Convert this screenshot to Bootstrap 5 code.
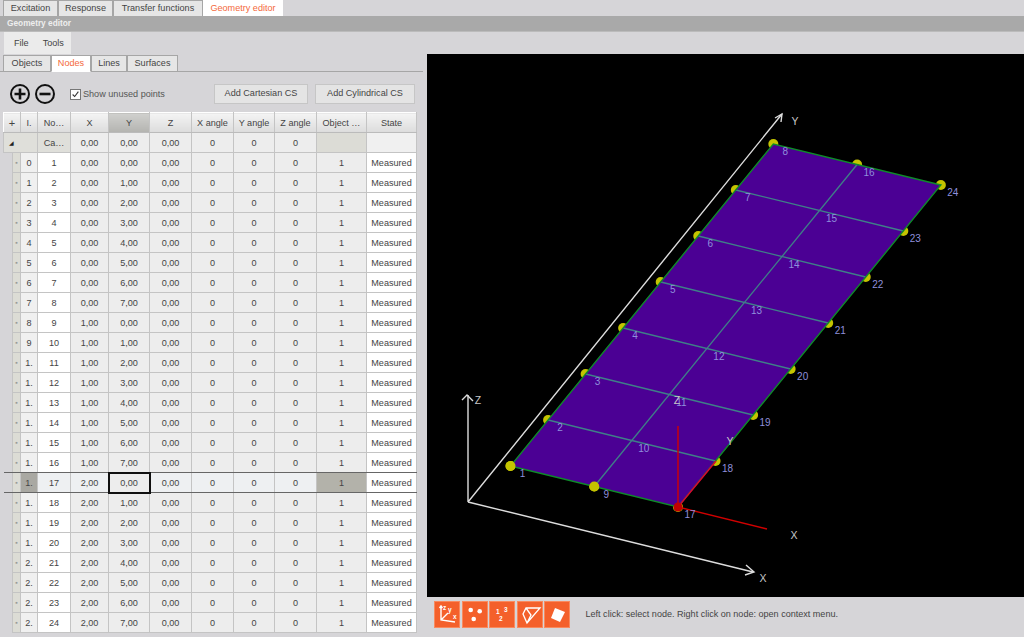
<!DOCTYPE html>
<html>
<head>
<meta charset="utf-8">
<title>Geometry editor</title>
<link rel="stylesheet" href="https://cdn.jsdelivr.net/npm/bootstrap@5.3.0/dist/css/bootstrap.min.css">
<script src="https://cdn.jsdelivr.net/npm/bootstrap@5.3.0/dist/js/bootstrap.bundle.min.js"></script>
<style>
html, body { height: 637px; overflow: hidden; }
body { background: #d6d5d8; color: #444; font: 9.1px "Liberation Sans", Arial, sans-serif; }
.main-tabs, .sub-tabs { border-bottom: 0; padding-left: 3px; flex-wrap: nowrap; }
.main-tabs { height: 16px; }
.sub-tabs { height: 17px; border-bottom: 1px solid #a6a6a6; margin: 1px 4px 0 0; }
.main-tabs .nav-link, .sub-tabs .nav-link { height: 16px; line-height: 15px; padding: 0; margin: 0; text-align: center; color: #444; background: #e6e6e6; border: 1px solid #a6a6a6; border-bottom: 0; border-radius: 0; font-size: 9.1px; }
.main-tabs .nav-link.active, .sub-tabs .nav-link.active { background: #fff; color: #f4693c; border-color: #fff; }
.sub-tabs .nav-link.active { border-color: #a6a6a6; border-bottom: 1px solid #fff; height: 17px; }
.t1 { width: 55px; } .t2 { width: 55px; } .t3 { width: 90px; } .t4 { width: 80px; }
.s1 { width: 48px; } .s2 { width: 40px; } .s3 { width: 36px; } .s4 { width: 51px; }
.title-bar { height: 16px; line-height: 15px; background: #a9a9a9; color: #eee; font-weight: 700; padding-left: 7px; font-size: 8.3px; border-bottom: 1px solid #bbb; }
.left-panel { width: 427px; height: 605px; flex: none; }
.menu-bar { height: 22px; width: 67px; margin-left: 4px; background: #ebebeb; gap: 14px; padding-left: 10px; line-height: 22px; font-size: 9.1px; }
.tool-row { height: 40px; padding: 4px 12px 0 9px; }
.round-btn { width: 22px; height: 22px; padding: 0; border: 0; background: none; line-height: 0; margin-right: 3px; }
.show-unused { margin: 0 0 0 11px; padding: 0; min-height: 0; gap: 2px; color: #555; }
.show-unused .form-check-input { float: none; margin: 0; width: 11px; height: 11px; border: 1px solid #777; border-radius: 0; background-color: #fff; --bs-form-check-bg-image: none; }
.show-unused .form-check-input:checked { background-image: url("data:image/svg+xml,%3csvg xmlns='http://www.w3.org/2000/svg' viewBox='0 0 11 11'%3e%3cpath d='M2 5.5l2.5 2.5 4.5-6' fill='none' stroke='%23333' stroke-width='1.3'/%3e%3c/svg%3e"); }
.cs-btn { height: 20px; padding: 0; background: #e4e4e4; border: 1px solid #c6c6c6; border-radius: 0; color: #444; font-size: 9.1px; }
.cs1 { width: 94px; margin-left: auto; margin-right: 7px; } .cs2 { width: 100px; }
.nodes-table { table-layout: fixed; width: 413px; margin: 0 0 0 3px; border-collapse: collapse; --bs-table-bg: transparent; --bs-table-color: #444; }
.nodes-table th, .nodes-table td { height: 20px; padding: 0; border: 1px solid #c4c4c4; text-align: center; vertical-align: middle; font-weight: 400; white-space: nowrap; overflow: hidden; color: #444; background: #ededed; box-shadow: none; }
.nodes-table thead th { height: 20px; background: linear-gradient(#f4f4f4, #dcdcdc); border-color: #fff #c4c4c4 #bbb #fff; }
.nodes-table thead th.sorted { background: linear-gradient(#d0d0ce, #b4b4b0); }
.nodes-table thead th.plus { font-size: 11px; }
.nodes-table td.white { background: #fff; }
.nodes-table td.indent { background: #d6d5d8; border: 0; }
.nodes-table td.mark { background: #dcdcd5; color: #999; font-size: 7px; }
.nodes-table td.idx { background: #f0f0f0; }
.nodes-table td.group { background: #dfdfda; }
.nodes-table td.group-tri { background: #dfdfda; text-align: left; padding-left: 5px; font-size: 5.5px; color: #222; border-right: 0; }
.nodes-table td.state-empty { background: #f0f0f0; }
.nodes-table td.obj-empty { background: #dcdcd6; }
.nodes-table tr:has(+ tr.sel) td { border-bottom: 1px solid #666; }
.nodes-table tr.sel td { background: #eef0f2; border-top: 1px solid #666; border-bottom: 1px solid #666; }
.nodes-table tr.sel td.indent { background: #d6d5d8; }
.nodes-table tr.sel td.mark { background: #dcdcd5; }
.nodes-table tr.sel td.idx { background: #a9a8a2; }
.nodes-table tr.sel td.white { background: #fff; }
.nodes-table tr.sel td.cur { outline: 2px solid #111; outline-offset: -1px; background: #ededed; }
.nodes-table tr.sel td.obj { background: #b3b2aa; }
.nodes-table tr.sel td.no { background: #eef0f2; }
.right-panel { height: 583px; min-width: 0; margin-top: 22px; }
.viewport { height: 543px; background: #000; line-height: 0; }
.viewport svg { display: block; }
.viewport text { font: 10px "Liberation Sans", Arial, sans-serif; fill: #8f8fdc; text-anchor: middle; }
.viewport text.axis { fill: #c8c8c8; font-size: 10.5px; }
.status-bar { height: 40px; padding: 4px 0 0 7px; }
.view-btn { width: 26px; height: 27px; padding: 0; margin-right: 1.5px; border: 1px solid #f98a5e; border-radius: 0; background: #f4602b; line-height: 0; }
.view-btn text { font: 700 6.5px "Liberation Sans", Arial, sans-serif; fill: #fff; }
.status-text { margin: 0 0 0 14px; font-size: 9.05px; color: #444; line-height: 27px; }
</style>
</head>
<body>
<ul class="nav main-tabs">
  <li class="nav-item"><a class="nav-link t1" href="#">Excitation</a></li>
  <li class="nav-item"><a class="nav-link t2" href="#">Response</a></li>
  <li class="nav-item"><a class="nav-link t3" href="#">Transfer functions</a></li>
  <li class="nav-item"><a class="nav-link t4 active" href="#">Geometry editor</a></li>
</ul>
<div class="title-bar">Geometry editor</div>

<div class="d-flex">
  <div class="left-panel">
    <div class="menu-bar d-flex"><span>File</span><span>Tools</span></div>
    <ul class="nav sub-tabs">
      <li class="nav-item"><a class="nav-link s1" href="#">Objects</a></li>
      <li class="nav-item"><a class="nav-link s2 active" href="#">Nodes</a></li>
      <li class="nav-item"><a class="nav-link s3" href="#">Lines</a></li>
      <li class="nav-item"><a class="nav-link s4" href="#">Surfaces</a></li>
    </ul>
    <div class="tool-row d-flex align-items-center">
      <button class="round-btn" type="button"><svg width="22" height="22" viewBox="0 0 22 22"><circle cx="11" cy="11" r="9" fill="none" stroke="#111" stroke-width="2"/><path d="M5.5 11h11M11 5.5v11" stroke="#111" stroke-width="2.6"/></svg></button>
      <button class="round-btn" type="button"><svg width="22" height="22" viewBox="0 0 22 22"><circle cx="11" cy="11" r="9" fill="none" stroke="#111" stroke-width="2"/><path d="M5.5 11h11" stroke="#111" stroke-width="2.6"/></svg></button>
      <div class="form-check show-unused d-flex align-items-center">
        <input class="form-check-input" type="checkbox" id="unused" checked>
        <label class="form-check-label" for="unused">Show unused points</label>
      </div>
      <button class="btn cs-btn cs1" type="button">Add Cartesian CS</button>
      <button class="btn cs-btn cs2" type="button">Add Cylindrical CS</button>
    </div>
    <table class="table nodes-table">
      <colgroup>
        <col style="width:9px"><col style="width:8px"><col style="width:17px"><col style="width:33px"><col style="width:38px"><col style="width:41px"><col style="width:42px"><col style="width:42px"><col style="width:41px"><col style="width:42px"><col style="width:50px"><col style="width:50px">
      </colgroup>
      <thead>
        <tr>
          <th class="plus" colspan="2">+</th><th>I.</th><th>No…</th><th>X</th><th class="sorted">Y</th><th>Z</th><th>X angle</th><th>Y angle</th><th>Z angle</th><th>Object …</th><th>State</th>
        </tr>
      </thead>
      <tbody id="rows">
        <tr>
          <td class="group-tri" colspan="3">◢</td><td class="group">Ca…</td><td>0,00</td><td>0,00</td><td>0,00</td><td>0</td><td>0</td><td>0</td><td class="obj-empty"></td><td class="state-empty"></td>
        </tr>
      </tbody>
    </table>
  </div>

  <div class="right-panel flex-grow-1">
    <div class="viewport">
      <svg id="scene" width="597" height="543" viewBox="427 54 597 543" xmlns="http://www.w3.org/2000/svg"></svg>
    </div>
    <div class="status-bar d-flex align-items-start">
      <button class="view-btn" type="button"><svg width="24" height="25" viewBox="0 0 24 25"><path d="M6 4v14l14 2M6 18l7-7M4.5 6L6 4l1.5 2" fill="none" stroke="#fff" stroke-width="1.4"/><text x="8" y="8">z</text><text x="13" y="10">y</text><text x="18" y="17">x</text></svg></button>
      <button class="view-btn" type="button"><svg width="24" height="25" viewBox="0 0 24 25"><circle cx="7.7" cy="8" r="2.3" fill="#fff"/><circle cx="16.7" cy="9.3" r="2.3" fill="#fff"/><circle cx="10.7" cy="17" r="2.3" fill="#fff"/></svg></button>
      <button class="view-btn" type="button"><svg width="24" height="25" viewBox="0 0 24 25"><text x="6" y="12">1</text><text x="14" y="10">3</text><text x="9" y="19">2</text></svg></button>
      <button class="view-btn" type="button"><svg width="24" height="25" viewBox="0 0 24 25"><path d="M8 6L22 6 9 21 5 12zM8 6L13 13 9 21" fill="none" stroke="#fff" stroke-width="1.3"/></svg></button>
      <button class="view-btn" type="button"><svg width="24" height="25" viewBox="0 0 24 25"><path d="M10 6L20 10 15 20 6 16z" fill="#fff"/></svg></button>
      <p class="status-text">Left click: select node. Right click on node: open context menu.</p>
    </div>
  </div>
</div>

<script>
  // table rows
  let rows = "";
  for (let i = 0; i < 24; i++) {
    let idx = i < 10 ? i : (i < 20 ? "1." : "2.");
    let x = Math.floor(i / 8) + ",00";
    let y = (i % 8) + ",00";
    let sel = i == 16;
    rows += `<tr class="${sel ? "sel" : ""}"><td class="indent"></td><td class="mark">▪</td><td class="idx">${idx}</td>` +
      `<td class="${sel ? "no" : "white"}">${i + 1}</td><td>${x}</td><td class="${sel ? "cur" : ""}">${y}</td><td>0,00</td><td>0</td><td>0</td><td>0</td>` +
      `<td class="obj">1</td><td class="white">Measured</td></tr>`;
  }
  document.getElementById("rows").insertAdjacentHTML("beforeend", rows);

  // 3d view, coordinates are page pixels
  function pt(col, row) {
    return [510.5 + col * 83.75 + row * 37.55, 466 + col * 20.5 - row * 46];
  }
  let s = "";
  // white axes
  s += `<path d="M468 502L782 114M468 502L753 572M468 502V395" stroke="#ddd" stroke-width="1.4" fill="none"/>`;
  s += `<path d="M775 118L782 114L781 122M746 565L754 572L745 575M462 400L467 395L473 401" stroke="#ddd" stroke-width="1.4" fill="none"/>`;
  // dots go first, the plate hides part of them
  for (let c = 0; c < 3; c++) {
    for (let r = 0; r < 8; r++) {
      let p = pt(c, r);
      s += `<circle cx="${p[0]}" cy="${p[1]}" r="5" fill="#c4c400"/>`;
    }
  }
  let a = pt(0, 0), b = pt(2, 0), c2 = pt(2, 7), d = pt(0, 7);
  s += `<polygon points="${a} ${b} ${c2} ${d}" fill="#4b0094"/>`;
  for (let r = 1; r < 7; r++) {
    s += `<line x1="${pt(0, r)[0]}" y1="${pt(0, r)[1]}" x2="${pt(2, r)[0]}" y2="${pt(2, r)[1]}" stroke="#3f7f88" stroke-width="1.3"/>`;
  }
  s += `<line x1="${pt(1, 0)[0]}" y1="${pt(1, 0)[1]}" x2="${pt(1, 7)[0]}" y2="${pt(1, 7)[1]}" stroke="#3f7f88" stroke-width="1.3"/>`;
  s += `<polygon points="${a} ${b} ${c2} ${d}" fill="none" stroke="#0f8a2a" stroke-width="1.4"/>`;
  // front edge nodes lie on top
  [pt(0, 0), pt(1, 0)].forEach(p => { s += `<circle cx="${p[0]}" cy="${p[1]}" r="5" fill="#c4c400"/>`; });
  // red local axes
  s += `<path d="M678 507V426M678 507L767 529" stroke="#d00000" stroke-width="1.4" fill="none"/><path d="M678 507L716 461" stroke="#e00030" stroke-width="1.4"/>`;
  s += `<circle cx="678" cy="507" r="4.5" fill="#c00000"/>`;
  // node numbers
  let n = 1;
  for (let c = 0; c < 3; c++) {
    for (let r = 0; r < 8; r++) {
      let p = pt(c, r);
      s += `<text x="${p[0] + 12}" y="${p[1] + 11}">${n}</text>`;
      n++;
    }
  }
  s += `<text class="axis" x="795" y="125">Y</text><text class="axis" x="763" y="582">X</text><text class="axis" x="478" y="404">Z</text>`;
  s += `<text class="axis" x="677" y="404">Z</text><text class="axis" x="730" y="445">Y</text><text class="axis" x="794" y="539">X</text>`;
  document.getElementById("scene").innerHTML = s;
</script>
</body>
</html>
